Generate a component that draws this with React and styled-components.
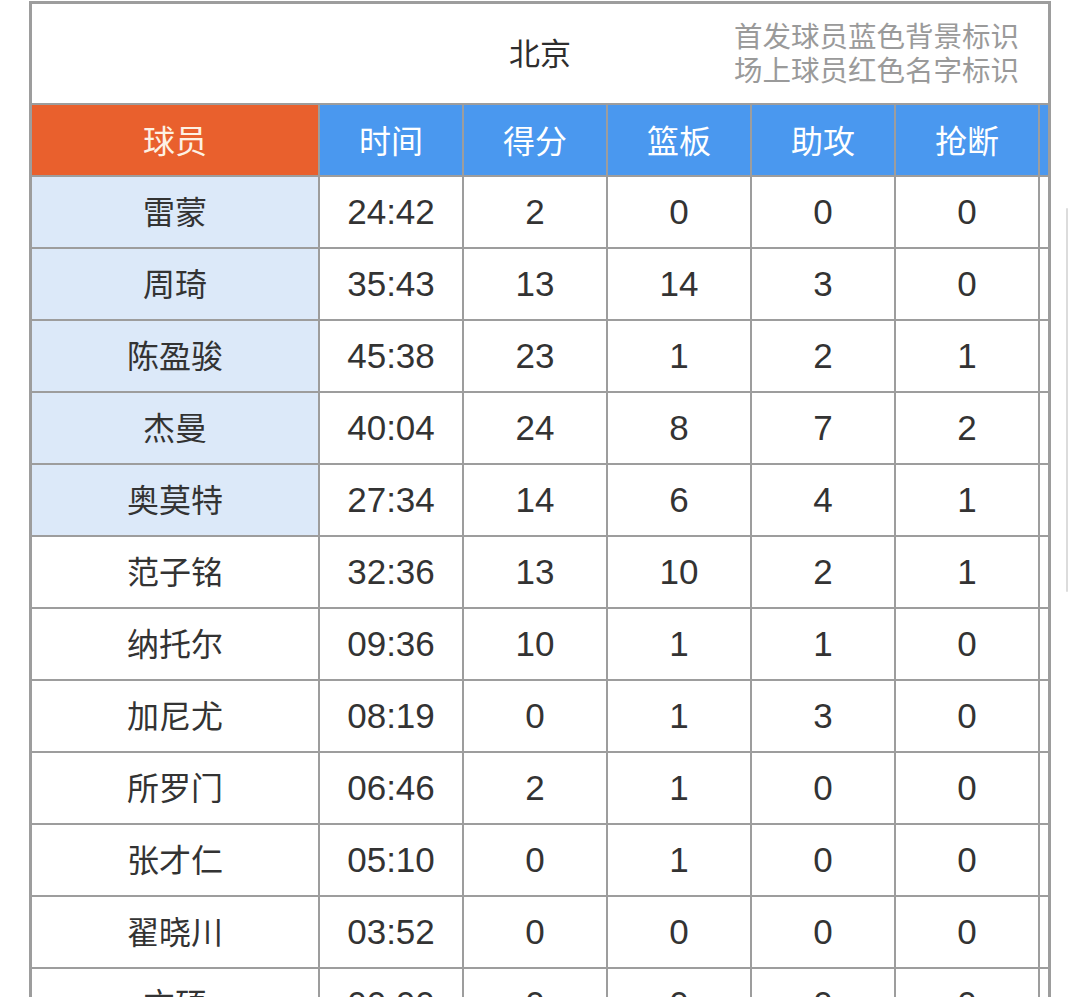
import React from "react";
import styled, { createGlobalStyle } from "styled-components";

const GlobalStyle = createGlobalStyle`
  html, body {
    margin: 0;
    padding: 0;
    background: #ffffff;
    overflow: hidden;
  }
  body {
    font-family: "Liberation Sans", "Noto Sans CJK SC", sans-serif;
    color: #333333;
  }
`;

const Page = styled.div`
  padding: 1px 0 0 29px;
  width: 1069px;
  box-sizing: border-box;
`;

const Board = styled.div`
  width: 1022px;
  box-sizing: border-box;
  border: 3px solid #9d9d9d;
  border-bottom: none;
  overflow: hidden;
  background: #ffffff;
`;

const TitleBar = styled.div`
  height: 99px;
  display: grid;
  grid-template-columns: 1fr auto 1fr;
  align-items: center;
  border-bottom: 2px solid #9d9d9d;
`;

const TeamName = styled.div`
  grid-column: 2;
  font-size: 31px;
  color: #2e2e2e;
  font-family: "Noto Sans CJK SC", sans-serif;
  padding-bottom: 4px;
`;

const Legend = styled.div`
  grid-column: 3;
  justify-self: end;
  padding-right: 29px;
  font-family: "Noto Sans CJK SC", sans-serif;
  font-size: 28.5px;
  line-height: 34px;
  color: #9a9a9a;
  text-align: right;
  white-space: nowrap;
  padding-bottom: 4px;
`;

const Grid = styled.div`
  display: grid;
  grid-template-columns: 286px repeat(6, 142px);
  grid-auto-rows: 70px;
  gap: 2px;
  background: #9d9d9d;
  width: max-content;
`;

const HeadCell = styled.div`
  display: flex;
  align-items: center;
  justify-content: center;
  background: ${(p) => (p.$accent ? "#e9602d" : "#4a98ef")};
  color: ${(p) => (p.$accent ? "#fdf1e4" : "#ffffff")};
  font-family: "Noto Sans CJK SC", sans-serif;
  font-size: 32px;
  padding-bottom: 3px;
`;

const Cell = styled.div`
  display: flex;
  align-items: center;
  justify-content: center;
  background: ${(p) => (p.$starter ? "#dce9f9" : "#ffffff")};
  font-size: ${(p) => (p.$name ? "32px" : "35px")};
  font-family: ${(p) =>
    p.$name
      ? `"Noto Sans CJK SC", sans-serif`
      : `"Liberation Sans", "Noto Sans CJK SC", sans-serif`};
  padding-bottom: ${(p) => (p.$name ? "5px" : "1px")};
  color: #333333;
`;

const ScrollHint = styled.div`
  position: fixed;
  left: 1066px;
  top: 208px;
  width: 2px;
  height: 384px;
  background: #dcdcdc;
  border-radius: 1px;
`;

const headers = ["球员", "时间", "得分", "篮板", "助攻", "抢断", "盖帽"];

const players = [
  ["雷蒙", "24:42", 2, 0, 0, 0, 0, true],
  ["周琦", "35:43", 13, 14, 3, 0, 2, true],
  ["陈盈骏", "45:38", 23, 1, 2, 1, 0, true],
  ["杰曼", "40:04", 24, 8, 7, 2, 0, true],
  ["奥莫特", "27:34", 14, 6, 4, 1, 1, true],
  ["范子铭", "32:36", 13, 10, 2, 1, 1, false],
  ["纳托尔", "09:36", 10, 1, 1, 0, 0, false],
  ["加尼尤", "08:19", 0, 1, 3, 0, 0, false],
  ["所罗门", "06:46", 2, 1, 0, 0, 0, false],
  ["张才仁", "05:10", 0, 1, 0, 0, 0, false],
  ["翟晓川", "03:52", 0, 0, 0, 0, 0, false],
  ["方硕", "00:00", 0, 0, 0, 0, 0, false],
];

export default function App() {
  return (
    <Page>
      <GlobalStyle />
      <Board>
        <TitleBar>
          <TeamName>北京</TeamName>
          <Legend>
            首发球员蓝色背景标识
            <br />
            场上球员红色名字标识
          </Legend>
        </TitleBar>
        <Grid>
          {headers.map((h, i) => (
            <HeadCell key={h} $accent={i === 0}>
              {h}
            </HeadCell>
          ))}
          {players.map((row) => {
            const starter = row[7];
            return row.slice(0, 7).map((v, i) => (
              <Cell
                key={row[0] + i}
                $name={i === 0}
                $starter={i === 0 && starter}
              >
                {v}
              </Cell>
            ));
          })}
        </Grid>
      </Board>
      <ScrollHint />
    </Page>
  );
}
